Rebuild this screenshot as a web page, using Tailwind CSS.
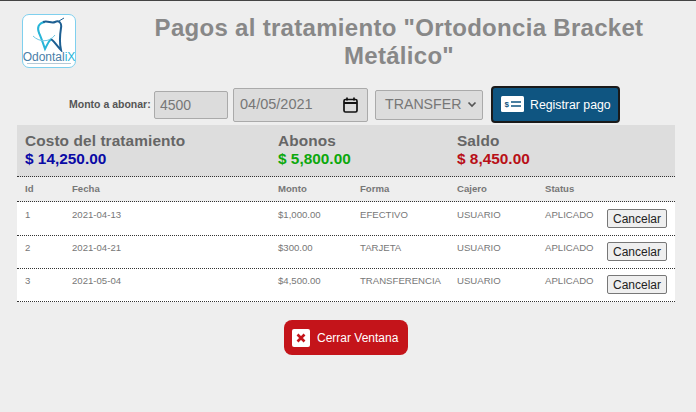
<!DOCTYPE html>
<html><head><meta charset="utf-8">
<script src="https://cdn.jsdelivr.net/npm/@tailwindcss/browser@4"></script>
</head>
<body class="w-[696px] h-[412px] overflow-hidden bg-[#eeeeee] font-['Liberation_Sans',Arial,sans-serif] text-[#777]">
<div class="h-px bg-[#444]"></div>
<div class="flex pl-[22px] pt-[13px] h-[83px]">
  <div class="w-[54px] h-[54px] rounded-[7px] border border-[#7fd0ee] bg-white flex flex-col items-center overflow-hidden shrink-0">
    <svg width="52" height="37" viewBox="0 0 52 37" fill="none" class="shrink-0">
      <path d="M22 7 C15 8 14 13 16 18 C18 22 20 28 22 34 C24 30 25 27 28 24" stroke="#27b5d8" stroke-width="2"/>
      <path d="M20 7 C25 5 28 9 32 7 C36 5 39 8 38 13 C37 19 36 26 38 35 C34 31 32 27 28 24" stroke="#1d5f92" stroke-width="2"/>
      <path d="M10 21 C16 27 26 28 32 20" stroke="#6fc9e4" stroke-width="1"/>
      <path d="M36 6 L41 3" stroke="#1d5f92" stroke-width="1"/>
    </svg>
    <div class="text-[12px] leading-[10px] text-[#4a7ea8] whitespace-nowrap">Odontal<span class="text-[#27b5d8]">iX</span></div>
    <div class="w-[44px] h-px bg-[#b5c9d6] mt-[1px] shrink-0"></div>
  </div>
  <h1 class="flex-1 pl-[50px] pr-[24px] text-center text-[24px] leading-[28px] font-bold tracking-[0.3px] text-[#888888]">Pagos al tratamiento "Ortodoncia Bracket Metálico"</h1>
</div>
<div class="flex items-center h-[41px] pl-[69px]">
  <span class="text-[10.500px] font-bold text-[#555] w-[85px] whitespace-nowrap">Monto a abonar:</span>
  <input value="4500" class="w-[74px] h-[28px] px-[5px] text-[14px] text-[#777] bg-[#dcdcdc] border border-[#aaa] rounded-[2px]">
  <div class="ml-[5px] w-[135px] h-[34px] px-[6px] flex items-center justify-between text-[14.500px] text-[#777] bg-[#dcdcdc] border border-[#aaa] rounded-[2px]">
    <span>04/05/2021</span>
    <svg width="15" height="16" viewBox="0 0 15 16" fill="none" class="mr-[3px]"><rect x="1" y="2.500" width="13" height="12.500" rx="1.500" stroke="#111" stroke-width="1.700"/><path d="M1 6h13" stroke="#111" stroke-width="2"/><path d="M4 0.500v3M11 0.500v3" stroke="#111" stroke-width="1.700"/></svg>
  </div>
  <div class="ml-[7px] w-[108px] h-[30px] pl-[9px] pr-[5px] flex items-center justify-between text-[14.200px] text-[#777] bg-[#dcdcdc] border border-[#aaa] rounded-[2px]">
    <span>TRANSFER</span>
    <svg width="10" height="7" viewBox="0 0 10 7" fill="none"><path d="M1.500 1.500 5 5l3.500-3.500" stroke="#555" stroke-width="1.700"/></svg>
  </div>
  <button class="ml-[8px] w-[129px] h-[37px] bg-[#0f5581] border-2 border-[#1a1a1a] rounded-[4px] flex items-center pl-[8px] text-white text-[12.300px]">
    <svg width="23" height="16" viewBox="0 0 23 16" class="shrink-0 -mt-[1px]"><rect width="23" height="16" rx="1.500" fill="#fff"/><text x="3.500" y="11" font-size="8" font-weight="700" fill="#0f5581" font-family="Liberation Sans">$</text><path d="M10 6h10M10 10h10" stroke="#0f5581" stroke-width="1.500"/></svg>
    <span class="ml-[6px] mt-[1px]">Registrar pago</span>
  </button>
</div>
<div class="mx-[17px] w-[658px]">
  <div class="h-[52px] bg-[#dddddd] border-b border-dotted border-[#333] grid grid-cols-[253px_179px_1fr] pl-[8px] pt-[7px] text-[15.400px] leading-[18px] font-bold">
    <div><div class="text-[#666] tracking-[0.1px]">Costo del tratamiento</div><div class="text-[#0a0aa5]">$ 14,250.00</div></div>
    <div><div class="text-[#666] tracking-[0.1px]">Abonos</div><div class="text-[#0ca80c]">$ 5,800.00</div></div>
    <div><div class="text-[#666] tracking-[0.1px]">Saldo</div><div class="text-[#b80f17]">$ 8,450.00</div></div>
  </div>
  <div class="h-[25px] grid grid-cols-[47px_206px_82px_97px_88px_130px] items-center pl-[8px] border-b border-dotted border-[#333] text-[9.600px] font-bold text-[#777]">
    <div>Id</div><div>Fecha</div><div>Monto</div><div>Forma</div><div>Cajero</div><div>Status</div>
  </div>
  <div class="h-[34px] bg-white grid grid-cols-[47px_206px_82px_97px_88px_62px_1fr] pl-[8px] pt-[6px] border-b border-dotted border-[#333] text-[9.600px] text-[#777]">
    <div>1</div><div>2021-04-13</div><div>$1,000.00</div><div>EFECTIVO</div><div>USUARIO</div><div>APLICADO</div><div><button class="w-[60px] h-[19px] text-[12px] text-[#222] bg-[#efefef] border border-[#777] rounded-[2px] mt-[1px] leading-none">Cancelar</button></div>
  </div>
  <div class="h-[33px] bg-white grid grid-cols-[47px_206px_82px_97px_88px_62px_1fr] pl-[8px] pt-[5px] border-b border-dotted border-[#333] text-[9.600px] text-[#777]">
    <div>2</div><div>2021-04-21</div><div>$300.00</div><div>TARJETA</div><div>USUARIO</div><div>APLICADO</div><div><button class="w-[60px] h-[19px] text-[12px] text-[#222] bg-[#efefef] border border-[#777] rounded-[2px] mt-[1px] leading-none">Cancelar</button></div>
  </div>
  <div class="h-[33px] bg-white grid grid-cols-[47px_206px_82px_97px_88px_62px_1fr] pl-[8px] pt-[5px] border-b border-dotted border-[#333] text-[9.600px] text-[#777]">
    <div>3</div><div>2021-05-04</div><div>$4,500.00</div><div>TRANSFERENCIA</div><div>USUARIO</div><div>APLICADO</div><div><button class="w-[60px] h-[19px] text-[12px] text-[#222] bg-[#efefef] border border-[#777] rounded-[2px] mt-[1px] leading-none">Cancelar</button></div>
  </div>
</div>
<div class="flex justify-center pt-[18px] pr-[4px]">
  <button class="w-[124px] h-[35px] bg-[#c4141a] rounded-[8px] flex items-center pl-[8px] text-white text-[12px]">
    <svg width="18" height="18" viewBox="0 0 18 18" class="shrink-0"><rect width="18" height="18" rx="2" fill="#fff"/><path d="M5.500 5.500l7 7M12.500 5.500l-7 7" stroke="#c4141a" stroke-width="2.600"/></svg>
    <span class="ml-[7px]">Cerrar Ventana</span>
  </button>
</div>
</body></html>
